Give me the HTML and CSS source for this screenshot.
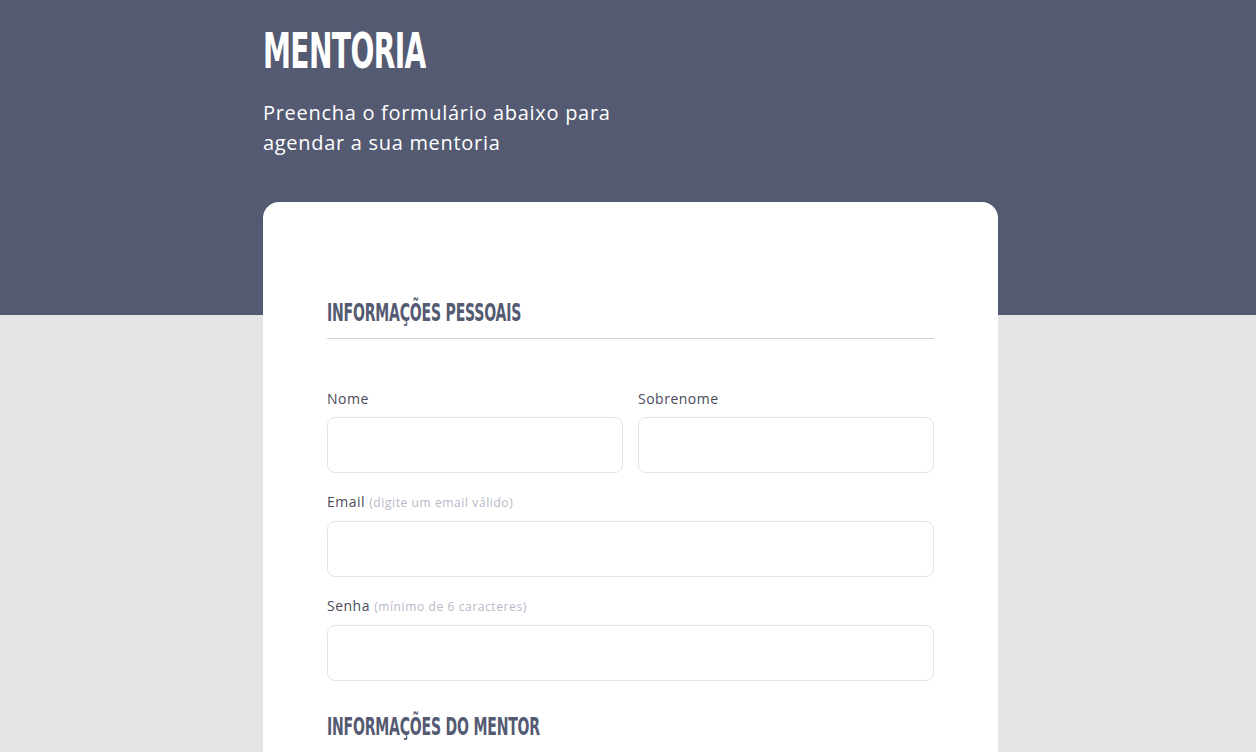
FILE: index.html
```html
<!DOCTYPE html>
<html lang="pt-BR">
<head>
<meta charset="utf-8">
<title>Mentoria</title>
<link rel="stylesheet" href="styles.css">
</head>
<body>
<header class="hero">
  <div class="container">
    <h1 class="hero-title"><span class="condensed">MENTORIA</span></h1>
    <p class="hero-subtitle">Preencha o formulário abaixo para agendar a sua mentoria</p>
  </div>
</header>
<main class="container card">
  <section class="section">
    <h2 class="section-title"><span class="condensed">Informações pessoais</span></h2>
    <div class="row two">
      <div class="field">
        <label class="label" for="nome">Nome</label>
        <input class="input" id="nome" type="text">
      </div>
      <div class="field">
        <label class="label" for="sobrenome">Sobrenome</label>
        <input class="input" id="sobrenome" type="text">
      </div>
    </div>
    <div class="field">
      <label class="label" for="email">Email <span class="hint">(digite um email válido)</span></label>
      <input class="input" id="email" type="email">
    </div>
    <div class="field">
      <label class="label" for="senha">Senha <span class="hint">(mínimo de 6 caracteres)</span></label>
      <input class="input" id="senha" type="password">
    </div>
  </section>
  <section class="section">
    <h2 class="section-title"><span class="condensed">Informações do mentor</span></h2>
  </section>
</main>
</body>
</html>
```
FILE: styles.css
```css
* { box-sizing: border-box; }
html, body { margin: 0; padding: 0; }
body {
  background: #e5e5e5;
  font-family: "Open Sans", "DejaVu Sans", sans-serif;
  color: #4a4a5a;
}
.container {
  width: 735px;
  margin-left: calc(50% - 365px);
}
.hero {
  background: #545a72;
  height: 315px;
  padding-top: 26px;
}
.condensed {
  display: inline-block;
  transform-origin: left center;
  white-space: nowrap;
}
.hero-title {
  margin: 0;
  font-family: "DejaVu Sans Condensed", "DejaVu Sans", sans-serif;
  font-weight: 700;
  font-size: 50px;
  line-height: 50px;
  color: #ffffff;
  letter-spacing: -1px;
}
.hero-title .condensed { transform: scaleX(0.625); }
.hero-subtitle {
  margin: 22px 0 0;
  width: 380px;
  font-size: 20px;
  line-height: 30px;
  letter-spacing: 0.7px;
  color: #ffffff;
}
.card {
  position: relative;
  margin-top: -113px;
  background: #ffffff;
  border-radius: 16px;
  padding: 98px 64px 40px;
  min-height: 600px;
}
.section { margin-bottom: 33px; }
.section-title {
  margin: 0 0 50px;
  padding-bottom: 12px;
  border-bottom: 1px solid #cfcfdc;
  font-family: "DejaVu Sans Condensed", "DejaVu Sans", sans-serif;
  font-weight: 700;
  font-size: 24px;
  line-height: 26px;
  text-transform: uppercase;
  color: #545a72;
  letter-spacing: -0.3px;
}
.section-title .condensed { transform: scaleX(0.65); }
.row.two {
  display: grid;
  grid-template-columns: 1fr 1fr;
  column-gap: 15px;
}
.field {
  display: flex;
  flex-direction: column;
  margin-bottom: 19px;
}
.label {
  font-size: 14px;
  line-height: 20px;
  letter-spacing: 0.5px;
  color: #4a4a5a;
  margin-bottom: 8px;
}
.hint {
  font-size: 12px;
  letter-spacing: 0.6px;
  color: #b8b8c8;
}
.input {
  height: 56px;
  border: 1px solid #e2e2ee;
  border-radius: 8px;
  background: #ffffff;
  font: inherit;
  padding: 0 16px;
  outline: none;
}
```
